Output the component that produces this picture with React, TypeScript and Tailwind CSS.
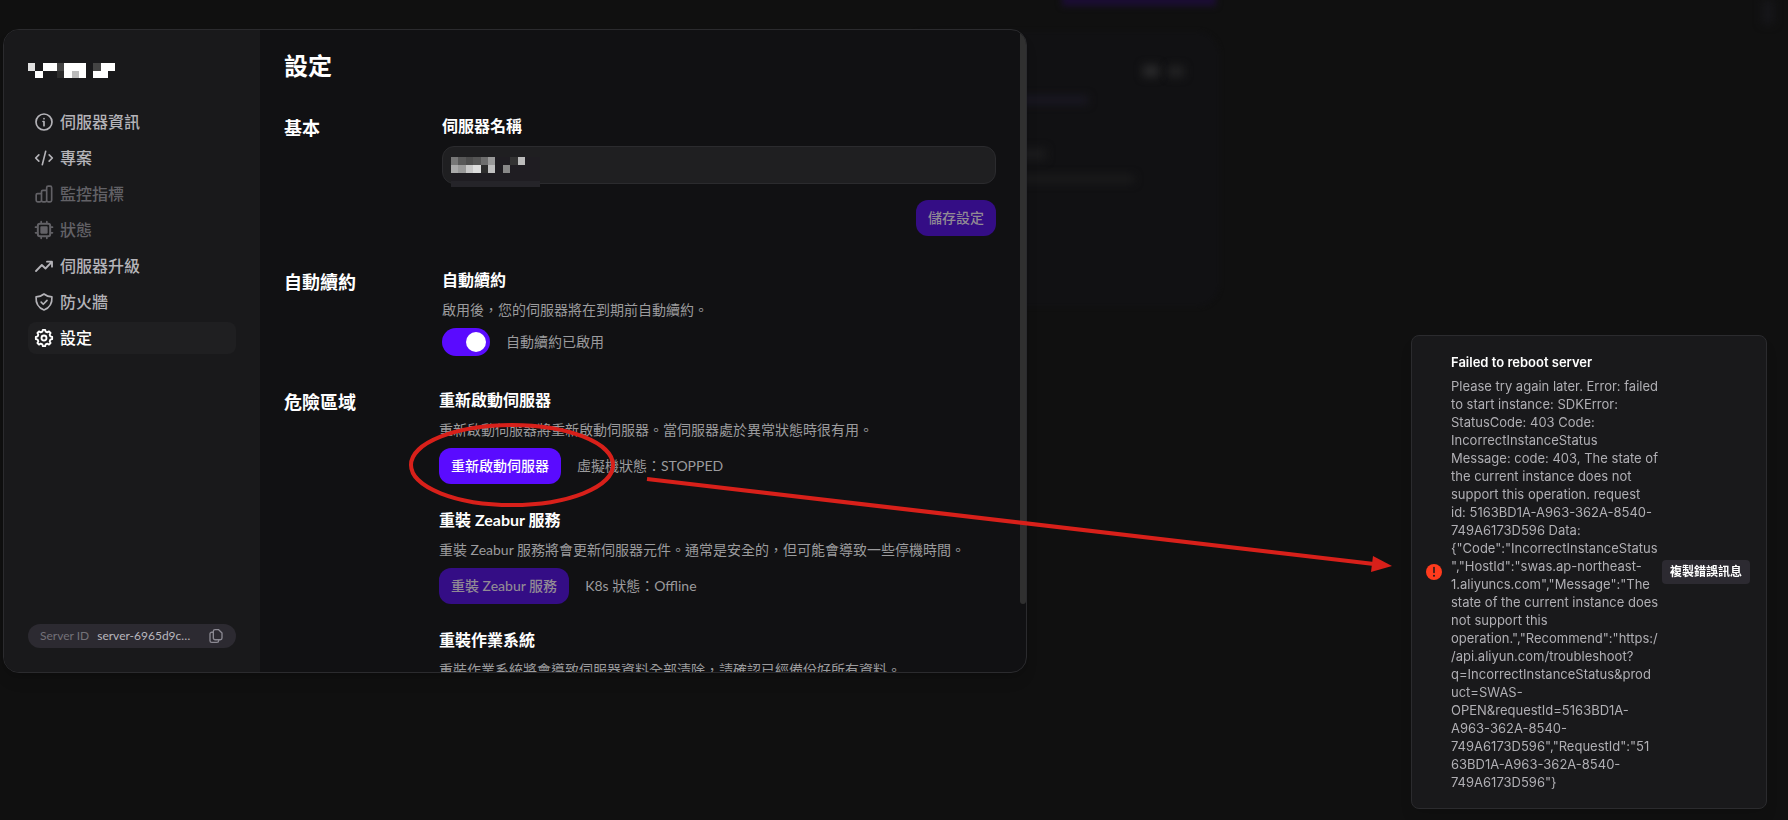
import { useState, type ReactNode } from 'react'
import clsx from 'clsx'

type NavItem = {
  label: string
  icon: ReactNode
  disabled?: boolean
  active?: boolean
}

function Icon({ children, className = 'size-5' }: { children: ReactNode; className?: string }) {
  return (
    <svg
      viewBox="0 0 24 24"
      fill="none"
      stroke="currentColor"
      strokeWidth={2}
      strokeLinecap="round"
      strokeLinejoin="round"
      className={clsx('shrink-0', className)}
      aria-hidden="true"
    >
      {children}
    </svg>
  )
}

const NAV_ITEMS: NavItem[] = [
  {
    label: '伺服器資訊',
    icon: (
      <Icon>
        <circle cx="12" cy="12" r="9.6" />
        <path d="M10.8 11.4H12v5M12 7.9v.1" />
      </Icon>
    ),
  },
  {
    label: '專案',
    icon: (
      <Icon>
        <path d="M5.8 8.200 2 12l3.800 3.800M18.200 8.200 22 12l-3.800 3.800M14 4l-4 16" />
      </Icon>
    ),
  },
  {
    label: '監控指標',
    disabled: true,
    icon: (
      <Icon>
        <path d="M2.6 13.2a1.600 1.600 0 0 1 1.600-1.600h5M9 9.200a1.600 1.600 0 0 1 1.600-1.600h4.600M2.600 13.200v6.400a1.800 1.800 0 0 0 1.800 1.800h2.800A1.800 1.800 0 0 0 9 19.600V9.200M9 19.600a1.800 1.800 0 0 0 1.800 1.800h2.600a1.800 1.800 0 0 0 1.800-1.800V4.400A1.800 1.800 0 0 1 17 2.600h2.400a1.800 1.800 0 0 1 1.800 1.800v15.200a1.800 1.800 0 0 1-1.800 1.800H17a1.800 1.800 0 0 1-1.800-1.800" />
      </Icon>
    ),
  },
  {
    label: '狀態',
    disabled: true,
    icon: (
      <Icon>
        <rect x="4.6" y="4.6" width="14.8" height="14.8" rx="2.4" strokeWidth="2.4" />
        <rect x="8.6" y="8.6" width="6.8" height="6.8" fill="currentColor" />
        <path d="M8.6 1.8v2M15.4 1.8v2M8.6 20.2v2M15.4 20.2v2M1.8 8.6h2M1.8 15.4h2M20.2 8.6h2M20.2 15.4h2" />
      </Icon>
    ),
  },
  {
    label: '伺服器升級',
    icon: (
      <Icon>
        <path d="M2.400 18l7-7.200 4.400 4.200 7.600-8M15.600 6.800h6v6" strokeWidth="2.200" />
      </Icon>
    ),
  },
  {
    label: '防火牆',
    icon: (
      <Icon>
        <path d="M12 2.400c2.600 2.200 5.800 3.400 9.500 3.400.4 6.600-2.300 13-9.500 15.800C4.800 18.800 2.100 12.400 2.500 5.800 6.200 5.800 9.400 4.600 12 2.400z" />
        <path d="m8.600 12.200 2.500 2.500 4.500-4.600" />
      </Icon>
    ),
  },
  {
    label: '設定',
    active: true,
    icon: (
      <Icon>
        <path
          d="M10 4.400 10.600 2.200h2.800L14 4.400l2 .8 2-1.100 1.900 1.900-1.100 2 .8 2 2.200.6v2.800l-2.200.6-.8 2 1.100 2-1.900 1.900-2-1.100-2 .8-.6 2.200h-2.800L10 19.600l-2-.8-2 1.100L4.100 18l1.100-2-.8-2-2.200-.6v-2.800L4.400 10l.8-2-1.100-2L6 4.100l2 1.100z"
          strokeWidth="2.200"
        />
        <circle cx="12" cy="12" r="3" strokeWidth="2.200" />
      </Icon>
    ),
  },
]

// one entry per cell, null leaves the background visible
const TITLE_MOSAIC = [
  ['#e0e0e0', null, '#fff', '#fff', '#444', '#fff', '#fff', '#fff', null, '#444', '#fff', '#fff'],
  [null, '#fff', null, null, '#2c2c2c', '#fff', '#bbb', '#fff', null, '#fff', '#fff', null],
]
const NAME_MOSAIC = [
  ['#777', '#585858', '#4c4c4c', '#555', '#6e6e6e', '#999', null, null, '#333', '#bbb'],
  ['#aaa', '#999', '#c8c8c8', '#ddd', '#2d2d2d', '#c0c0c0', null, '#888', null, null],
]

function Mosaic({ rows, className }: { rows: (string | null)[][]; className: string }) {
  return (
    <svg
      viewBox={`0 0 ${rows[0].length} ${rows.length}`}
      preserveAspectRatio="none"
      shapeRendering="crispEdges"
      className={className}
      aria-hidden="true"
    >
      {rows.map((row, y) =>
        row.map((fill, x) => fill && <rect key={`${x}-${y}`} x={x} y={y} width="1" height="1" fill={fill} />),
      )}
    </svg>
  )
}

function Sidebar() {
  return (
    <aside className="flex w-64 shrink-0 flex-col bg-[#19191b] px-6 pt-[33px] pb-6">
      <Mosaic rows={TITLE_MOSAIC} className="h-[15px] w-[87px]" />
      <nav className="mt-7 flex flex-col gap-1">
        {NAV_ITEMS.map(item => (
          <button
            key={item.label}
            type="button"
            disabled={item.disabled}
            className={clsx(
              'flex h-8 items-center gap-1.5 rounded-lg px-1.5 text-base leading-6 font-medium',
              item.active && 'bg-[#1f1f21] text-white',
              item.disabled && 'text-[#626166]',
              !item.active && !item.disabled && 'text-[#b4b3b8]',
            )}
          >
            {item.icon}
            {item.label}
          </button>
        ))}
      </nav>
      <div className="mt-auto flex h-6 items-center rounded-full bg-[#2c2a31] px-3 text-xs">
        <span className="text-[#737178]">Server ID</span>
        <span className="ml-2 text-[#b8b6bd]">server-6965d9c…</span>
        <button type="button" aria-label="複製 Server ID" className="ml-auto text-[#8b8992]">
          <Icon className="size-4">
            <path d="M8 5a2.600 2.600 0 0 1 2.600-2.600h5l5.400 5.200V15a2.600 2.600 0 0 1-2.600 2.600h-7.800A2.600 2.600 0 0 1 8 15zM8 6.400H5.600A2.600 2.600 0 0 0 3 9v10a2.600 2.600 0 0 0 2.600 2.600h7.800A2.600 2.600 0 0 0 16 19v-1.400" />
          </Icon>
        </button>
      </div>
    </aside>
  )
}

function Section({ title, wide, children }: { title: string; wide?: boolean; children: ReactNode }) {
  return (
    <section className="flex">
      <h2 className={clsx('shrink-0 text-lg leading-7 font-bold', wide ? 'w-[155px]' : 'w-[158px]')}>{title}</h2>
      <div className="flex min-w-0 flex-1 flex-col">{children}</div>
    </section>
  )
}

function ActionButton({ disabled, children }: { disabled?: boolean; children: ReactNode }) {
  return (
    <button
      type="button"
      disabled={disabled}
      className={clsx(
        'h-9 rounded-xl px-3 text-sm font-medium whitespace-nowrap',
        disabled ? 'bg-[#340d85] text-[#918a94]' : 'bg-[#5a0bff] text-white',
      )}
    >
      {children}
    </button>
  )
}

function DangerItem({ title, description, children }: { title: string; description: string; children?: ReactNode }) {
  return (
    <div className="flex flex-col gap-2">
      <h3 className="text-base leading-6 font-bold">{title}</h3>
      <p className="text-sm leading-5 text-[#9b9b9d]">{description}</p>
      <div className="flex items-center gap-4 text-sm text-[#9b9b9d]">{children}</div>
    </div>
  )
}

function SettingsPage() {
  const [autoRenew, setAutoRenew] = useState(true)

  return (
    <main className="flex min-w-0 flex-1 flex-col overflow-hidden px-6 pt-5 whitespace-nowrap text-white">
      <h1 className="text-2xl leading-8 font-bold">設定</h1>
      <div className="mt-8 flex flex-col gap-8">
        <Section title="基本">
          <label htmlFor="server-name" className="text-base leading-6 font-bold">
            伺服器名稱
          </label>
          <div className="relative mt-2">
            <input
              id="server-name"
              type="text"
              className="block h-[38px] w-full rounded-xl border border-[#2b2b2e] bg-[#1f1f21] px-2 text-sm outline-none"
            />
            <div className="pointer-events-none absolute top-[11px] left-[9px] w-[89px] border-b-6 border-[#252429] bg-[#1f1d22] pb-2">
              <Mosaic rows={NAME_MOSAIC} className="block h-4 w-[74px]" />
            </div>
          </div>
          <div className="mt-4 flex justify-end">
            <ActionButton disabled>儲存設定</ActionButton>
          </div>
        </Section>

        <Section title="自動續約">
          <h3 className="text-base leading-6 font-bold">自動續約</h3>
          <p className="mt-2 text-sm leading-5 text-[#9b9b9d]">啟用後，您的伺服器將在到期前自動續約。</p>
          <label className="mt-2 flex items-center gap-4 text-sm text-[#9b9b9d]">
            <input
              type="checkbox"
              role="switch"
              checked={autoRenew}
              onChange={e => setAutoRenew(e.target.checked)}
              className="h-7 w-12 appearance-none rounded-full bg-[#3a3a3e] p-1 before:block before:size-5 before:rounded-full before:bg-white before:content-[''] checked:bg-[#5a0bff] checked:before:translate-x-5"
            />
            自動續約已啟用
          </label>
        </Section>

        <Section title="危險區域" wide>
          <div className="flex flex-col gap-6">
            <DangerItem title="重新啟動伺服器" description="重新啟動伺服器將重新啟動伺服器。當伺服器處於異常狀態時很有用。">
              <ActionButton>重新啟動伺服器</ActionButton>
              <span>虛擬機狀態：STOPPED</span>
            </DangerItem>
            <DangerItem
              title="重裝 Zeabur 服務"
              description="重裝 Zeabur 服務將會更新伺服器元件。通常是安全的，但可能會導致一些停機時間。"
            >
              <ActionButton disabled>重裝 Zeabur 服務</ActionButton>
              <span>K8s 狀態：Offline</span>
            </DangerItem>
            <DangerItem
              title="重裝作業系統"
              description="重裝作業系統將會導致伺服器資料全部清除，請確認已經備份好所有資料。"
            />
          </div>
        </Section>
      </div>
    </main>
  )
}

const ERROR_LINES = [
  'Please try again later. Error: failed',
  'to start instance: SDKError:',
  'StatusCode: 403 Code:',
  'IncorrectInstanceStatus',
  'Message: code: 403, The state of',
  'the current instance does not',
  'support this operation. request',
  'id: 5163BD1A-A963-362A-8540-',
  '749A6173D596 Data:',
  '{"Code":"IncorrectInstanceStatus',
  '","HostId":"swas.ap-northeast-',
  '1.aliyuncs.com","Message":"The',
  'state of the current instance does',
  'not support this',
  'operation.","Recommend":"https:/',
  '/api.aliyun.com/troubleshoot?',
  'q=IncorrectInstanceStatus&prod',
  'uct=SWAS-',
  'OPEN&requestId=5163BD1A-',
  'A963-362A-8540-',
  '749A6173D596","RequestId":"51',
  '63BD1A-A963-362A-8540-',
  '749A6173D596"}',
]

function ErrorToast() {
  return (
    <div
      role="alert"
      className="fixed right-[21px] bottom-[11px] flex w-[356px] items-center rounded-lg border border-[#2b2b2e] bg-[#19191b] py-[17px] pr-4 pl-3.5 font-['Inter','Noto_Sans_CJK_TC',sans-serif] text-[13px] leading-[18px] shadow-lg"
    >
      <svg viewBox="0 0 16 16" className="size-4 shrink-0" aria-hidden="true">
        <circle cx="8" cy="8" r="8" fill="#ff3b1d" />
        <path d="M8 3.600v5" stroke="#19191b" strokeWidth="1.500" strokeLinecap="round" />
        <circle cx="8" cy="11.700" r="1" fill="#19191b" />
      </svg>
      <div className="ml-[9px] min-w-0 flex-1">
        <p className="font-semibold text-white">Failed to reboot server</p>
        <p className="mt-1.5 whitespace-pre text-[#b0afb4]">{ERROR_LINES.join('\n')}</p>
      </div>
      <button
        type="button"
        className="h-6 shrink-0 rounded-sm bg-[#2c2a31] px-2 text-xs font-bold whitespace-nowrap text-white"
      >
        複製錯誤訊息
      </button>
    </div>
  )
}

// dimmed page that shows through behind the dialog
function Backdrop() {
  return (
    <div className="pointer-events-none absolute inset-0 overflow-hidden" aria-hidden="true">
      <div className="absolute -top-4 left-[1062px] h-[22px] w-[154px] bg-[#1b0d33] blur-[3px]" />
      <div className="absolute top-[31px] left-[900px] h-[276px] w-[320px] rounded-3xl bg-[#111113] blur-[2px]" />
      <div className="absolute top-[65px] left-[1143px] h-3 w-[16px] bg-[#29292a] blur-[4px]" />
      <div className="absolute top-[66px] left-[1168px] h-[11px] w-[16px] bg-[#222223] blur-[4px]" />
      <div className="absolute top-[96px] left-[1000px] h-2 w-[88px] bg-[#1a1824] blur-[4px]" />
      <div className="absolute top-[148px] left-[1000px] h-3 w-[46px] bg-[#1b1b1c] blur-[4px]" />
      <div className="absolute top-[175px] left-[1000px] h-2 w-[134px] bg-[#1b1b1c] blur-[4px]" />
      <div className="absolute top-0 left-[1762px] h-6 w-3 bg-[#16161a] blur-[4px]" />
    </div>
  )
}

function Annotation() {
  return (
    <svg
      width="1400"
      height="600"
      className="pointer-events-none absolute top-0 left-0 text-[#d8201a]"
      fill="none"
      stroke="currentColor"
      strokeWidth="4"
      aria-hidden="true"
    >
      <ellipse cx="512" cy="465" rx="101" ry="40" />
      <path d="M647 479 1374 564" />
      <path d="M1373 556 1392 566 1371 572z" fill="currentColor" stroke="none" />
    </svg>
  )
}

export default function App() {
  return (
    <div
      lang="zh-Hant"
      className="relative h-screen overflow-hidden bg-[#101010] pt-[29px] pl-[3px] font-['Lato','Noto_Sans_CJK_TC',sans-serif]"
    >
      <Backdrop />
      <div
        role="dialog"
        aria-label="設定"
        className="relative flex h-[calc(100vh-176px)] w-full max-w-5xl overflow-hidden rounded-2xl border border-[#2b2b2e] bg-[#111113] shadow-lg"
      >
        <Sidebar />
        <SettingsPage />
        <div className="h-[574px] w-1.5 shrink-0 rounded-b-full bg-[#303030]" />
      </div>
      <ErrorToast />
      <Annotation />
    </div>
  )
}
